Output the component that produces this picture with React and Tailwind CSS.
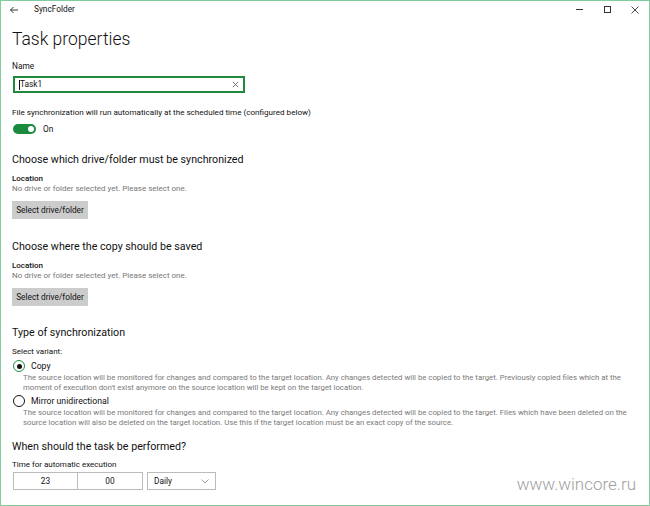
import React from 'react';

const font = { fontFamily: 'Roboto, "Noto Sans", sans-serif' };

const Heading = ({ children, className = '' }) => (
    <h2 className={`text-[10.7px] leading-[14px] text-[#111] ${className}`}>{children}</h2>
);

const LocationBlock = ({ title, className = '' }) => (
    <div className={className}>
        <Heading>{title}</Heading>
        <div className="mt-[7px] text-[8px] leading-[10px] font-medium text-[#111]">Location</div>
        <div className="text-[8px] leading-[10px] text-[#777]">No drive or folder selected yet. Please select one.</div>
        <button className="mt-[7px] h-[18px] w-[76px] bg-[#cccccc] text-[8.3px] text-[#111] flex items-center justify-center">
            Select drive/folder
        </button>
    </div>
);

const Radio = ({ checked, label, text }) => (
    <div>
        <div className="flex items-center gap-[6px]">
            {checked ? (
                <span className="w-[12px] h-[12px] rounded-full border-[1.5px] border-[#1e8b45] flex items-center justify-center">
                    <span className="w-[5px] h-[5px] rounded-full bg-[#111]" />
                </span>
            ) : (
                <span className="w-[12px] h-[12px] rounded-full border-[1.5px] border-[#111]" />
            )}
            <span className="text-[8.7px] leading-[12px] text-[#111]">{label}</span>
        </div>
        <p className="mt-[1px] pl-[10px] text-[7.8px] leading-[10px] text-[#7a7a7a]">{text}</p>
    </div>
);

export default function App() {
    return (
        <div style={font} className="w-[650px] h-[506px] bg-white border border-[#80cc9c] relative overflow-hidden">
            {/* Title bar */}
            <div className="h-[17px] flex items-center">
                <svg width="10" height="10" viewBox="0 0 10 10" className="ml-[8px]">
                    <path d="M9 5H1.5M4.5 2L1.5 5l3 3" fill="none" stroke="#222" strokeWidth="0.9" />
                </svg>
                <span className="ml-[15px] text-[8.3px] text-[#111]">SyncFolder</span>
                <div className="ml-auto flex items-center">
                    <span className="w-[28px] flex justify-center">
                        <span className="w-[7px] h-px bg-[#333]" />
                    </span>
                    <span className="w-[28px] flex justify-center">
                        <span className="w-[7px] h-[7px] border border-[#333]" />
                    </span>
                    <span className="w-[28px] flex justify-center">
                        <svg width="8" height="8" viewBox="0 0 8 8">
                            <path d="M0.5 0.5l7 7M7.5 0.5l-7 7" stroke="#333" strokeWidth="0.9" />
                        </svg>
                    </span>
                </div>
            </div>

            <div className="px-[11px]">
                <h1 className="mt-[8px] text-[17.5px] leading-[26px] font-light text-[#111]">Task properties</h1>

                <div className="mt-[9px] text-[8.3px] leading-[11px] text-[#111]">Name</div>
                <div className="mt-[4px] ml-[1px] w-[232px] h-[17px] border-2 border-[#1f8a3f] flex items-center px-[4px]">
                    <span className="w-px h-[10px] bg-[#111]" />
                    <span className="text-[8.3px] text-[#111] flex-1">Task1</span>
                    <svg width="7" height="7" viewBox="0 0 8 8">
                        <path d="M1 1l6 6M7 1L1 7" stroke="#555" strokeWidth="0.9" />
                    </svg>
                </div>

                <div className="mt-[14px] text-[8.1px] leading-[11px] text-[#111]">
                    File synchronization will run automatically at the scheduled time (configured below)
                </div>
                <div className="mt-[5px] ml-[1px] flex items-center gap-[7px]">
                    <span className="w-[23px] h-[10px] rounded-full bg-[#1b8a3f] flex items-center justify-end pr-[2px]">
                        <span className="w-[6px] h-[6px] rounded-full bg-white" />
                    </span>
                    <span className="text-[8.3px] text-[#111]">On</span>
                </div>

                <LocationBlock className="mt-[18px]" title="Choose which drive/folder must be synchronized" />
                <LocationBlock className="mt-[21px]" title="Choose where the copy should be saved" />

                <Heading className="mt-[20px]">Type of synchronization</Heading>
                <div className="mt-[6px] text-[8px] leading-[11px] text-[#111]">Select variant:</div>
                <div className="mt-[3px] ml-[1px] flex flex-col gap-[2px]">
                    <Radio
                        checked
                        label="Copy"
                        text="The source location will be monitored for changes and compared to the target location. Any changes detected will be copied to the target. Previously copied files which at the moment of execution don't exist anymore on the source location will be kept on the target location."
                    />
                    <Radio
                        label="Mirror unidirectional"
                        text="The source location will be monitored for changes and compared to the target location. Any changes detected will be copied to the target. Files which have been deleted on the source location will also be deleted on the target location. Use this if the target location must be an exact copy of the source."
                    />
                </div>

                <Heading className="mt-[12px]">When should the task be performed?</Heading>
                <div className="mt-[5px] text-[8px] leading-[11px] text-[#111]">Time for automatic execution</div>
                <div className="mt-[2px] ml-[1px] flex items-center">
                    <div className="flex border border-[#bbb]">
                        <div className="w-[64px] h-[16px] flex items-center justify-center text-[8.3px] text-[#111] border-r border-[#bbb]">23</div>
                        <div className="w-[64px] h-[16px] flex items-center justify-center text-[8.3px] text-[#111]">00</div>
                    </div>
                    <div className="ml-[4px] w-[69px] h-[18px] border border-[#bbb] flex items-center px-[6px] text-[8.3px] text-[#111]">
                        <span className="flex-1">Daily</span>
                        <svg width="8" height="5" viewBox="0 0 8 5">
                            <path d="M0.5 0.5L4 4l3.5-3.5" fill="none" stroke="#888" strokeWidth="0.8" />
                        </svg>
                    </div>
                </div>
            </div>

            {/* watermark */}
            <div className="absolute right-[13px] bottom-[8px] text-[17px] font-light text-[#a0a0a0]">
                www.wincore.ru
            </div>
        </div>
    );
}
